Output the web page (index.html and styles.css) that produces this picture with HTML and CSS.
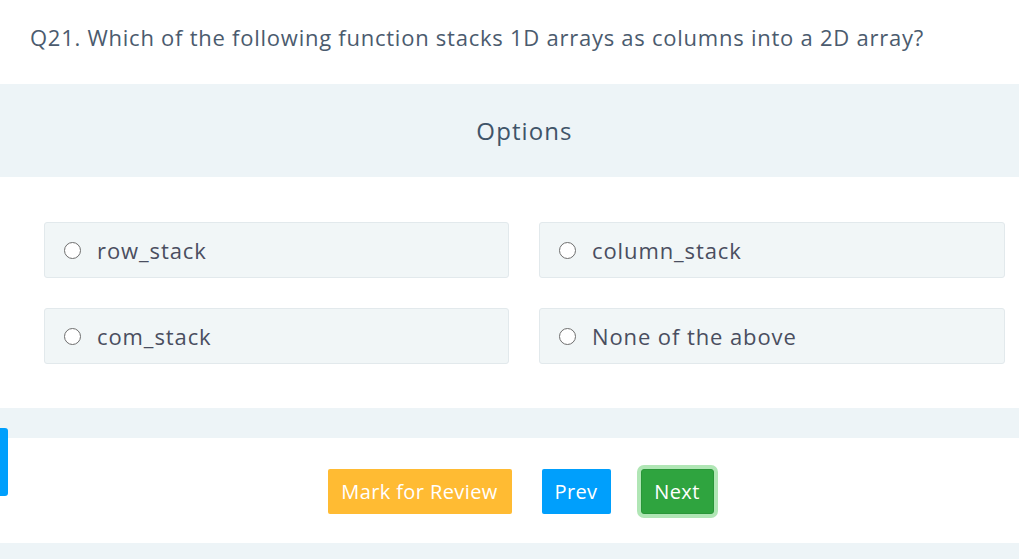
FILE: index.html
```html
<!DOCTYPE html>
<html lang="en">
<head>
<meta charset="utf-8">
<title>Q21</title>
<link rel="stylesheet" href="styles.css">
</head>
<body>
<div class="page">
  <div class="question">Q21. Which of the following function stacks 1D arrays as columns into a 2D array?</div>
  <div class="options-head">Options</div>
  <div class="options-body">
    <div class="option"><span class="radio"></span><span class="opt-text">row_stack</span></div>
    <div class="option"><span class="radio"></span><span class="opt-text">column_stack</span></div>
    <div class="option"><span class="radio"></span><span class="opt-text">com_stack</span></div>
    <div class="option"><span class="radio"></span><span class="opt-text">None of the above</span></div>
  </div>
  <div class="band"></div>
  <div class="actions">
    <button class="btn btn-review">Mark for Review</button>
    <button class="btn btn-prev">Prev</button>
    <button class="btn btn-next">Next</button>
  </div>
  <div class="band-bottom"></div>
  <div class="side-tab"></div>
</div>
</body>
</html>
```
FILE: styles.css
```css
html, body {
  margin: 0;
  padding: 0;
  background: #ffffff;
}
body {
  font-family: "Open Sans", "Noto Sans", sans-serif;
  overflow: hidden;
}
.page {
  position: relative;
  width: 1019px;
  height: 559px;
}
.question {
  box-sizing: border-box;
  height: 84px;
  padding: 21px 30px 0 30px;
  font-size: 22px;
  letter-spacing: 0.75px;
  line-height: 32px;
  color: #4b5b6e;
  white-space: nowrap;
}
.options-head {
  box-sizing: border-box;
  height: 93px;
  padding-left: 30px;
  background: #edf4f7;
  display: flex;
  align-items: center;
  justify-content: center;
  font-size: 24px;
  letter-spacing: 1.1px;
  color: #3f5469;
}
.options-body {
  padding: 45px 14px 44px 44px;
  display: grid;
  grid-template-columns: 465px 466px;
  column-gap: 30px;
  row-gap: 30px;
}
.option {
  box-sizing: border-box;
  height: 56px;
  background: #f1f6f7;
  border: 1px solid #e2e9ec;
  border-radius: 3px;
  display: flex;
  align-items: center;
  padding-left: 19px;
}
.radio {
  box-sizing: border-box;
  width: 17px;
  height: 17px;
  border: 1.6px solid #6e6e6e;
  border-radius: 50%;
  background: #ffffff;
  flex: none;
}
.opt-text {
  margin-left: 16px;
  font-size: 22px;
  letter-spacing: 0.9px;
  color: #4a4e5f;
}
.band {
  height: 30px;
  background: #edf4f7;
}
.actions {
  height: 105px;
  display: flex;
  align-items: center;
  justify-content: center;
  gap: 30px;
  padding-left: 22px;
  padding-top: 2px;
  box-sizing: border-box;
}
.btn {
  box-sizing: border-box;
  height: 45px;
  border: none;
  border-radius: 2px;
  color: #ffffff;
  font-family: "Open Sans", "Noto Sans", sans-serif;
  font-size: 20px;
  letter-spacing: 0.4px;
  padding: 0;
  cursor: pointer;
}
.btn-review {
  width: 184px;
  background: #ffbb33;
}
.btn-prev {
  width: 69px;
  background: #009ffc;
}
.btn-next {
  width: 73px;
  background: #2fa43f;
  border: 1px solid #2a9639;
  box-shadow: 0 0 0 4px #b0e6b5;
  border-radius: 3px;
}
.band-bottom {
  height: 16px;
  background: #edf4f7;
}
.side-tab {
  position: absolute;
  left: 0;
  top: 428px;
  width: 8px;
  height: 68px;
  background: #009ffc;
  border-radius: 0 3px 3px 0;
}
```
